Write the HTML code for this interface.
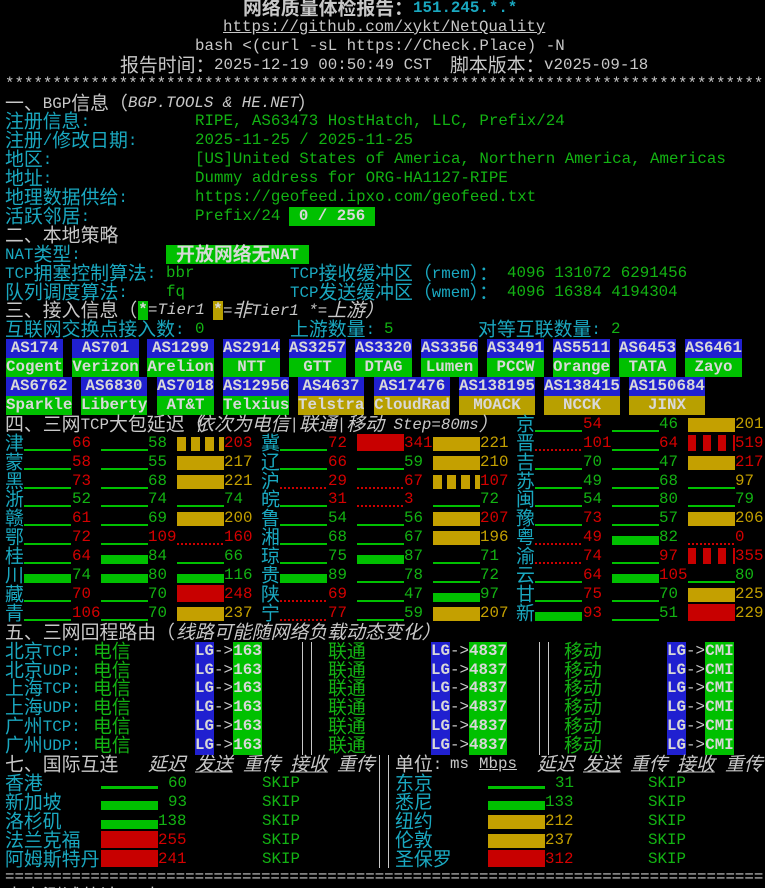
<!DOCTYPE html>
<html><head><meta charset="utf-8"><style>
html,body{margin:0;background:#000;width:765px;height:888px;overflow:hidden}
body{position:relative;font:15.8px/18.9px "Liberation Mono","Noto Sans CJK SC",monospace;color:#c8c8c8}
.r{position:absolute;left:0;width:765px;height:19px}
.r>*{position:absolute;top:0;white-space:pre;height:19px;font-style:normal;text-decoration:none}
.c,k{font-size:18.9px;line-height:18.9px;letter-spacing:0}
.c{transform:translateY(1.5px)}
k{font-style:inherit;display:inline-block;transform:translateY(1.5px)}
.cy{color:#1aa8c0}.gn{color:#13b313}.rd{color:#d40000}.yl{color:#c4a000}
.it{font-style:italic!important}.u{text-decoration:underline!important}
.bx{font-weight:bold;color:#d8d8d8;text-align:center;letter-spacing:0}
.BB{background:#2020d0}.BG{background:#00c000}.BY{background:#b8a000}
.r>.L,.r>.G,.r>.Y,.r>.R,.r>.P,.r>.Q,.r>.D{width:47px}
.r>.L{top:15px;height:2px;background:#00c000}
.r>.G{top:8px;height:9px;background:#00c000}
.r>.Y{top:3px;height:14px;background:#c4a000}
.r>.R{top:0px;height:17px;background:#c80000}
.r>.P{top:3px;height:14px;background:repeating-linear-gradient(90deg,#c4a000 0 9px,#000 9px 14px)}
.r>.Q{top:1px;height:16px;background:repeating-linear-gradient(90deg,#c80000 0 8px,#000 8px 15px)}
.r>.D{top:15px;height:2px;background:repeating-linear-gradient(90deg,#c00 0 2px,transparent 2px 4px)}
.a1{left:5px}.a2{left:24px}.a3{left:72px}.a4{left:101px}.a5{left:148px}.a6{left:177px}.a7{left:224px}
.b1{left:261px}.b2{left:280px}.b3{left:328px}.b4{left:357px}.b5{left:404px}.b6{left:433px}.b7{left:480px}
.c1{left:516px}.c2{left:535px}.c3{left:583px}.c4{left:612px}.c5{left:659px}.c6{left:688px}.c7{left:735px}
.vl{position:absolute;width:1px;background:#c8c8c8}
</style></head><body>

<div class="r" style="top:-1px"><span style="left:243px;font-weight:bold" class="c">网络质量体检报告：</span><span class="cy" style="left:413px;font-weight:bold">151.245.*.*</span></div>
<div class="r" style="top:17.9px"><span class="u" style="left:223px">https://github.com/xykt/NetQuality</span></div>
<div class="r" style="top:36.8px"><span style="left:195px">bash &lt;(curl -sL https://Check.Place) -N</span></div>
<div class="r" style="top:55.7px"><span class="c" style="left:120px">报告时间：</span><span style="left:214px">2025-12-19 00:50:49 CST</span><span class="c" style="left:450px">脚本版本：</span><span style="left:544px">v2025-09-18</span></div>
<div class="r" style="top:74.6px"><span style="left:5px">********************************************************************************</span></div>
<div class="r" style="top:93.5px"><span style="left:5px"><k>一、</k>BGP<k>信息（</k></span><span class="it" style="left:128px">BGP.TOOLS &amp; HE.NET</span><span class="c" style="left:298px">）</span></div>
<div class="r" style="top:112.4px"><span class="cy" style="left:5px"><k>注册信息</k>:</span><span class="gn" style="left:195px">RIPE, AS63473 HostHatch, LLC, Prefix/24</span></div>
<div class="r" style="top:131.3px"><span class="cy" style="left:5px"><k>注册</k>/<k>修改日期</k>:</span><span class="gn" style="left:195px">2025-11-25 / 2025-11-25</span></div>
<div class="r" style="top:150.2px"><span class="cy" style="left:5px"><k>地区</k>:</span><span class="gn" style="left:195px">[US]United States of America, Northern America, Americas</span></div>
<div class="r" style="top:169.1px"><span class="cy" style="left:5px"><k>地址</k>:</span><span class="gn" style="left:195px">Dummy address for ORG-HA1127-RIPE</span></div>
<div class="r" style="top:188px"><span class="cy" style="left:5px"><k>地理数据供给</k>:</span><span class="gn" style="left:195px">https://geofeed.ipxo.com/geofeed.txt</span></div>
<div class="r" style="top:206.9px"><span class="cy" style="left:5px"><k>活跃邻居</k>:</span><span class="gn" style="left:195px">Prefix/24</span><span class="bx BG" style="left:289px;width:86px">0 / 256</span></div>
<div class="r" style="top:225.8px"><span class="c" style="left:5px">二、本地策略</span></div>
<div class="r" style="top:244.7px"><span class="cy" style="left:5px">NAT<k>类型</k>:</span><span class="bx BG" style="left:166px;width:143px"><k>开放网络无</k>NAT</span></div>
<div class="r" style="top:263.6px"><span class="cy" style="left:5px">TCP<k>拥塞控制算法</k>:</span><span class="gn" style="left:166px">bbr</span><span class="cy" style="left:290px">TCP<k>接收缓冲区（</k>rmem<k>）：</k></span><span class="gn" style="left:507px">4096 131072 6291456</span></div>
<div class="r" style="top:282.5px"><span class="cy" style="left:5px"><k>队列调度算法</k>:</span><span class="gn" style="left:166px">fq</span><span class="cy" style="left:290px">TCP<k>发送缓冲区（</k>wmem<k>）：</k></span><span class="gn" style="left:507px">4096 16384 4194304</span></div>
<div class="r" style="top:301.4px"><span class="c" style="left:5px">三、接入信息（</span><span class="bx BG" style="left:138px;width:10px">*</span><span class="it" style="left:148px">=Tier1</span><span class="bx BY" style="left:213px;width:10px">*</span><span class="it" style="left:223px">=<k>非</k>Tier1 *=<k>上游）</k></span></div>
<div class="r" style="top:320.3px"><span class="cy" style="left:5px"><k>互联网交换点接入数</k>:</span><span class="gn" style="left:195px">0</span><span class="cy" style="left:290px"><k>上游数量</k>:</span><span class="gn" style="left:384px">5</span><span class="cy" style="left:478px"><k>对等互联数量</k>:</span><span class="gn" style="left:611px">2</span></div>

<div class="r" style="top:339.2px">
<span class="bx BB" style="left:6px;width:57px">AS174</span><span class="bx BB" style="left:72px;width:67px">AS701</span><span class="bx BB" style="left:147px;width:67px">AS1299</span><span class="bx BB" style="left:223px;width:57px">AS2914</span><span class="bx BB" style="left:289px;width:57px">AS3257</span><span class="bx BB" style="left:355px;width:57px">AS3320</span><span class="bx BB" style="left:421px;width:57px">AS3356</span><span class="bx BB" style="left:487px;width:57px">AS3491</span><span class="bx BB" style="left:553px;width:57px">AS5511</span><span class="bx BB" style="left:619px;width:57px">AS6453</span><span class="bx BB" style="left:685px;width:57px">AS6461</span></div>
<div class="r" style="top:358.1px">
<span class="bx BG" style="left:6px;width:57px">Cogent</span><span class="bx BG" style="left:72px;width:67px">Verizon</span><span class="bx BG" style="left:147px;width:67px">Arelion</span><span class="bx BG" style="left:223px;width:57px">NTT</span><span class="bx BG" style="left:289px;width:57px">GTT</span><span class="bx BG" style="left:355px;width:57px">DTAG</span><span class="bx BG" style="left:421px;width:57px">Lumen</span><span class="bx BG" style="left:487px;width:57px">PCCW</span><span class="bx BG" style="left:553px;width:57px">Orange</span><span class="bx BG" style="left:619px;width:57px">TATA</span><span class="bx BG" style="left:685px;width:57px">Zayo</span></div>
<div class="r" style="top:377px">
<span class="bx BB" style="left:6px;width:66px">AS6762</span><span class="bx BB" style="left:81px;width:66px">AS6830</span><span class="bx BB" style="left:157px;width:57px">AS7018</span><span class="bx BB" style="left:223px;width:66px">AS12956</span><span class="bx BB" style="left:298px;width:66px">AS4637</span><span class="bx BB" style="left:374px;width:76px">AS17476</span><span class="bx BB" style="left:459px;width:76px">AS138195</span><span class="bx BB" style="left:544px;width:76px">AS138415</span><span class="bx BB" style="left:629px;width:76px">AS150684</span></div>
<div class="r" style="top:395.9px">
<span class="bx BG" style="left:6px;width:66px">Sparkle</span><span class="bx BG" style="left:81px;width:66px">Liberty</span><span class="bx BG" style="left:157px;width:57px">AT&amp;T</span><span class="bx BG" style="left:223px;width:66px">Telxius</span><span class="bx BY" style="left:298px;width:66px">Telstra</span><span class="bx BY" style="left:374px;width:76px">CloudRad</span><span class="bx BY" style="left:459px;width:76px">MOACK</span><span class="bx BY" style="left:544px;width:76px">NCCK</span><span class="bx BY" style="left:629px;width:76px">JINX</span></div>

<div class="r" style="top:414.8px"><span style="left:5px"><k>四、三网</k>TCP<k>大包延迟（</k></span><span class="it" style="left:195px"><k>依次为电信</k>|<k>联通</k>|<k>移动</k> Step=80ms<k>）</k></span>
<span class="cy c1 c">京</span><b class="L c2"></b><span class="rd c3">54</span><b class="L c4"></b><span class="gn c5">46</span><b class="Y c6"></b><span class="yl c7">201</span></div>

<div class="r" style="top:433.7px">
<span class="cy a1 c">津</span><b class="L a2"></b><span class="rd a3">66</span><b class="L a4"></b><span class="gn a5">58</span><b class="P a6"></b><span class="rd a7">203</span>
<span class="cy b1 c">冀</span><b class="L b2"></b><span class="rd b3">72</span><b class="R b4"></b><span class="rd b5">341</span><b class="Y b6"></b><span class="yl b7">221</span>
<span class="cy c1 c">晋</span><b class="D c2"></b><span class="rd c3">101</span><b class="L c4"></b><span class="rd c5">64</span><b class="Q c6"></b><span class="rd c7">519</span></div>

<div class="r" style="top:452.6px">
<span class="cy a1 c">蒙</span><b class="L a2"></b><span class="rd a3">58</span><b class="L a4"></b><span class="gn a5">55</span><b class="Y a6"></b><span class="yl a7">217</span>
<span class="cy b1 c">辽</span><b class="L b2"></b><span class="rd b3">66</span><b class="L b4"></b><span class="gn b5">59</span><b class="Y b6"></b><span class="yl b7">210</span>
<span class="cy c1 c">吉</span><b class="L c2"></b><span class="gn c3">70</span><b class="L c4"></b><span class="gn c5">47</span><b class="Y c6"></b><span class="rd c7">217</span></div>

<div class="r" style="top:471.5px">
<span class="cy a1 c">黑</span><b class="L a2"></b><span class="rd a3">73</span><b class="L a4"></b><span class="gn a5">68</span><b class="Y a6"></b><span class="yl a7">221</span>
<span class="cy b1 c">沪</span><b class="D b2"></b><span class="rd b3">29</span><b class="D b4"></b><span class="rd b5">67</span><b class="P b6"></b><span class="rd b7">107</span>
<span class="cy c1 c">苏</span><b class="L c2"></b><span class="gn c3">49</span><b class="L c4"></b><span class="gn c5">68</span><b class="L c6"></b><span class="yl c7">97</span></div>

<div class="r" style="top:490.4px">
<span class="cy a1 c">浙</span><b class="L a2"></b><span class="gn a3">52</span><b class="L a4"></b><span class="gn a5">74</span><b class="L a6"></b><span class="gn a7">74</span>
<span class="cy b1 c">皖</span><b class="L b2"></b><span class="rd b3">31</span><b class="D b4"></b><span class="rd b5">3</span><b class="L b6"></b><span class="gn b7">72</span>
<span class="cy c1 c">闽</span><b class="L c2"></b><span class="gn c3">54</span><b class="L c4"></b><span class="gn c5">80</span><b class="L c6"></b><span class="gn c7">79</span></div>

<div class="r" style="top:509.3px">
<span class="cy a1 c">赣</span><b class="L a2"></b><span class="rd a3">61</span><b class="L a4"></b><span class="gn a5">69</span><b class="Y a6"></b><span class="yl a7">200</span>
<span class="cy b1 c">鲁</span><b class="L b2"></b><span class="gn b3">54</span><b class="L b4"></b><span class="gn b5">56</span><b class="Y b6"></b><span class="rd b7">207</span>
<span class="cy c1 c">豫</span><b class="L c2"></b><span class="rd c3">73</span><b class="L c4"></b><span class="gn c5">57</span><b class="Y c6"></b><span class="yl c7">206</span></div>

<div class="r" style="top:528.2px">
<span class="cy a1 c">鄂</span><b class="L a2"></b><span class="rd a3">72</span><b class="L a4"></b><span class="rd a5">109</span><b class="D a6"></b><span class="rd a7">160</span>
<span class="cy b1 c">湘</span><b class="L b2"></b><span class="gn b3">68</span><b class="L b4"></b><span class="gn b5">67</span><b class="Y b6"></b><span class="yl b7">196</span>
<span class="cy c1 c">粤</span><b class="D c2"></b><span class="rd c3">49</span><b class="G c4"></b><span class="gn c5">82</span><b class="D c6"></b><span class="rd c7">0</span></div>

<div class="r" style="top:547.1px">
<span class="cy a1 c">桂</span><b class="L a2"></b><span class="rd a3">64</span><b class="G a4"></b><span class="gn a5">84</span><b class="L a6"></b><span class="gn a7">66</span>
<span class="cy b1 c">琼</span><b class="L b2"></b><span class="gn b3">75</span><b class="G b4"></b><span class="gn b5">87</span><b class="L b6"></b><span class="gn b7">71</span>
<span class="cy c1 c">渝</span><b class="D c2"></b><span class="rd c3">74</span><b class="L c4"></b><span class="rd c5">97</span><b class="Q c6"></b><span class="rd c7">355</span></div>

<div class="r" style="top:566px">
<span class="cy a1 c">川</span><b class="G a2"></b><span class="gn a3">74</span><b class="G a4"></b><span class="gn a5">80</span><b class="G a6"></b><span class="gn a7">116</span>
<span class="cy b1 c">贵</span><b class="G b2"></b><span class="gn b3">89</span><b class="L b4"></b><span class="gn b5">78</span><b class="L b6"></b><span class="gn b7">72</span>
<span class="cy c1 c">云</span><b class="L c2"></b><span class="rd c3">64</span><b class="G c4"></b><span class="rd c5">105</span><b class="L c6"></b><span class="gn c7">80</span></div>

<div class="r" style="top:584.9px">
<span class="cy a1 c">藏</span><b class="L a2"></b><span class="rd a3">70</span><b class="L a4"></b><span class="gn a5">70</span><b class="R a6"></b><span class="rd a7">248</span>
<span class="cy b1 c">陕</span><b class="D b2"></b><span class="rd b3">69</span><b class="L b4"></b><span class="gn b5">47</span><b class="G b6"></b><span class="gn b7">97</span>
<span class="cy c1 c">甘</span><b class="L c2"></b><span class="rd c3">75</span><b class="L c4"></b><span class="gn c5">70</span><b class="Y c6"></b><span class="yl c7">225</span></div>

<div class="r" style="top:603.8px">
<span class="cy a1 c">青</span><b class="L a2"></b><span class="rd a3">106</span><b class="L a4"></b><span class="gn a5">70</span><b class="Y a6"></b><span class="yl a7">237</span>
<span class="cy b1 c">宁</span><b class="D b2"></b><span class="rd b3">77</span><b class="L b4"></b><span class="gn b5">59</span><b class="Y b6"></b><span class="yl b7">207</span>
<span class="cy c1 c">新</span><b class="G c2"></b><span class="rd c3">93</span><b class="L c4"></b><span class="gn c5">51</span><b class="R c6"></b><span class="yl c7">229</span></div>

<div class="r" style="top:622.7px"><span class="c" style="left:5px">五、三网回程路由（</span><span class="it c" style="left:176px">线路可能随网络负载动态变化）</span></div>

<div class="r" style="top:641.6px"><span class="cy" style="left:5px"><k>北京</k>TCP:</span><span class="gn c" style="left:93px">电信</span><span class="bx BB" style="left:195px;width:19px">LG</span><span style="left:214px">-&gt;</span><span class="bx BG" style="left:233px;width:29px">163</span><span class="gn c" style="left:328px">联通</span><span class="bx BB" style="left:431px;width:19px">LG</span><span style="left:450px">-&gt;</span><span class="bx BG" style="left:469px;width:38px">4837</span><span class="gn c" style="left:564px">移动</span><span class="bx BB" style="left:667px;width:19px">LG</span><span style="left:686px">-&gt;</span><span class="bx BG" style="left:705px;width:29px">CMI</span></div>
<div class="r" style="top:660.5px"><span class="cy" style="left:5px"><k>北京</k>UDP:</span><span class="gn c" style="left:93px">电信</span><span class="bx BB" style="left:195px;width:19px">LG</span><span style="left:214px">-&gt;</span><span class="bx BG" style="left:233px;width:29px">163</span><span class="gn c" style="left:328px">联通</span><span class="bx BB" style="left:431px;width:19px">LG</span><span style="left:450px">-&gt;</span><span class="bx BG" style="left:469px;width:38px">4837</span><span class="gn c" style="left:564px">移动</span><span class="bx BB" style="left:667px;width:19px">LG</span><span style="left:686px">-&gt;</span><span class="bx BG" style="left:705px;width:29px">CMI</span></div>
<div class="r" style="top:679.4px"><span class="cy" style="left:5px"><k>上海</k>TCP:</span><span class="gn c" style="left:93px">电信</span><span class="bx BB" style="left:195px;width:19px">LG</span><span style="left:214px">-&gt;</span><span class="bx BG" style="left:233px;width:29px">163</span><span class="gn c" style="left:328px">联通</span><span class="bx BB" style="left:431px;width:19px">LG</span><span style="left:450px">-&gt;</span><span class="bx BG" style="left:469px;width:38px">4837</span><span class="gn c" style="left:564px">移动</span><span class="bx BB" style="left:667px;width:19px">LG</span><span style="left:686px">-&gt;</span><span class="bx BG" style="left:705px;width:29px">CMI</span></div>
<div class="r" style="top:698.3px"><span class="cy" style="left:5px"><k>上海</k>UDP:</span><span class="gn c" style="left:93px">电信</span><span class="bx BB" style="left:195px;width:19px">LG</span><span style="left:214px">-&gt;</span><span class="bx BG" style="left:233px;width:29px">163</span><span class="gn c" style="left:328px">联通</span><span class="bx BB" style="left:431px;width:19px">LG</span><span style="left:450px">-&gt;</span><span class="bx BG" style="left:469px;width:38px">4837</span><span class="gn c" style="left:564px">移动</span><span class="bx BB" style="left:667px;width:19px">LG</span><span style="left:686px">-&gt;</span><span class="bx BG" style="left:705px;width:29px">CMI</span></div>
<div class="r" style="top:717.2px"><span class="cy" style="left:5px"><k>广州</k>TCP:</span><span class="gn c" style="left:93px">电信</span><span class="bx BB" style="left:195px;width:19px">LG</span><span style="left:214px">-&gt;</span><span class="bx BG" style="left:233px;width:29px">163</span><span class="gn c" style="left:328px">联通</span><span class="bx BB" style="left:431px;width:19px">LG</span><span style="left:450px">-&gt;</span><span class="bx BG" style="left:469px;width:38px">4837</span><span class="gn c" style="left:564px">移动</span><span class="bx BB" style="left:667px;width:19px">LG</span><span style="left:686px">-&gt;</span><span class="bx BG" style="left:705px;width:29px">CMI</span></div>
<div class="r" style="top:736.1px"><span class="cy" style="left:5px"><k>广州</k>UDP:</span><span class="gn c" style="left:93px">电信</span><span class="bx BB" style="left:195px;width:19px">LG</span><span style="left:214px">-&gt;</span><span class="bx BG" style="left:233px;width:29px">163</span><span class="gn c" style="left:328px">联通</span><span class="bx BB" style="left:431px;width:19px">LG</span><span style="left:450px">-&gt;</span><span class="bx BG" style="left:469px;width:38px">4837</span><span class="gn c" style="left:564px">移动</span><span class="bx BB" style="left:667px;width:19px">LG</span><span style="left:686px">-&gt;</span><span class="bx BG" style="left:705px;width:29px">CMI</span></div>
<div class="vl" style="left:302px;top:642px;height:113px"></div><div class="vl" style="left:311px;top:642px;height:113px"></div>
<div class="vl" style="left:539px;top:642px;height:113px"></div><div class="vl" style="left:548px;top:642px;height:113px"></div>

<div class="r" style="top:755px"><span class="c" style="left:5px">七、国际互连</span><span class="it c" style="left:148px">延迟</span><span class="it u c" style="left:195px">发送</span><span class="it c" style="left:243px">重传</span><span class="it u c" style="left:290px">接收</span><span class="it c" style="left:337px">重传</span><span style="left:395px"><k>单位</k>:</span><span style="left:450px">ms</span><span class="u" style="left:479px">Mbps</span><span class="it c" style="left:537px">延迟</span><span class="it u c" style="left:583px">发送</span><span class="it c" style="left:630px">重传</span><span class="it u c" style="left:677px">接收</span><span class="it c" style="left:725px">重传</span></div>
<div class="vl" style="left:379px;top:755px;height:113px"></div><div class="vl" style="left:388px;top:755px;height:113px"></div>

<div class="r" style="top:773.9px"><span class="cy c" style="left:5px">香港</span><b class="L" style="left:101px;width:57px;top:12px;height:3px"></b><span class="gn" style="left:158px;width:29px;text-align:right">60</span><span class="gn" style="left:262px">SKIP</span><span class="cy c" style="left:395px">东京</span><b class="L" style="left:488px;width:57px;top:12px;height:3px"></b><span class="gn" style="left:545px;width:29px;text-align:right">31</span><span class="gn" style="left:648px">SKIP</span></div>
<div class="r" style="top:792.8px"><span class="cy c" style="left:5px">新加坡</span><b class="G" style="left:101px;width:57px"></b><span class="gn" style="left:158px;width:29px;text-align:right">93</span><span class="gn" style="left:262px">SKIP</span><span class="cy c" style="left:395px">悉尼</span><b class="G" style="left:488px;width:57px"></b><span class="gn" style="left:545px">133</span><span class="gn" style="left:648px">SKIP</span></div>
<div class="r" style="top:811.7px"><span class="cy c" style="left:5px">洛杉矶</span><b class="G" style="left:101px;width:57px"></b><span class="gn" style="left:158px">138</span><span class="gn" style="left:262px">SKIP</span><span class="cy c" style="left:395px">纽约</span><b class="Y" style="left:488px;width:57px"></b><span class="yl" style="left:545px">212</span><span class="gn" style="left:648px">SKIP</span></div>
<div class="r" style="top:830.6px"><span class="cy c" style="left:5px">法兰克福</span><b class="R" style="left:101px;width:57px"></b><span class="rd" style="left:158px">255</span><span class="gn" style="left:262px">SKIP</span><span class="cy c" style="left:395px">伦敦</span><b class="Y" style="left:488px;width:57px"></b><span class="yl" style="left:545px">237</span><span class="gn" style="left:648px">SKIP</span></div>
<div class="r" style="top:849.5px"><span class="cy c" style="left:5px">阿姆斯特丹</span><b class="R" style="left:101px;width:57px"></b><span class="rd" style="left:158px">241</span><span class="gn" style="left:262px">SKIP</span><span class="cy c" style="left:395px">圣保罗</span><b class="R" style="left:488px;width:57px"></b><span class="rd" style="left:545px">312</span><span class="gn" style="left:648px">SKIP</span></div>
<div class="r" style="top:868.4px"><span style="left:5px">================================================================================</span></div>
<div class="r" style="top:887px"><span class="c" style="left:5px">本次测试共计用时</span></div>
</body></html>
